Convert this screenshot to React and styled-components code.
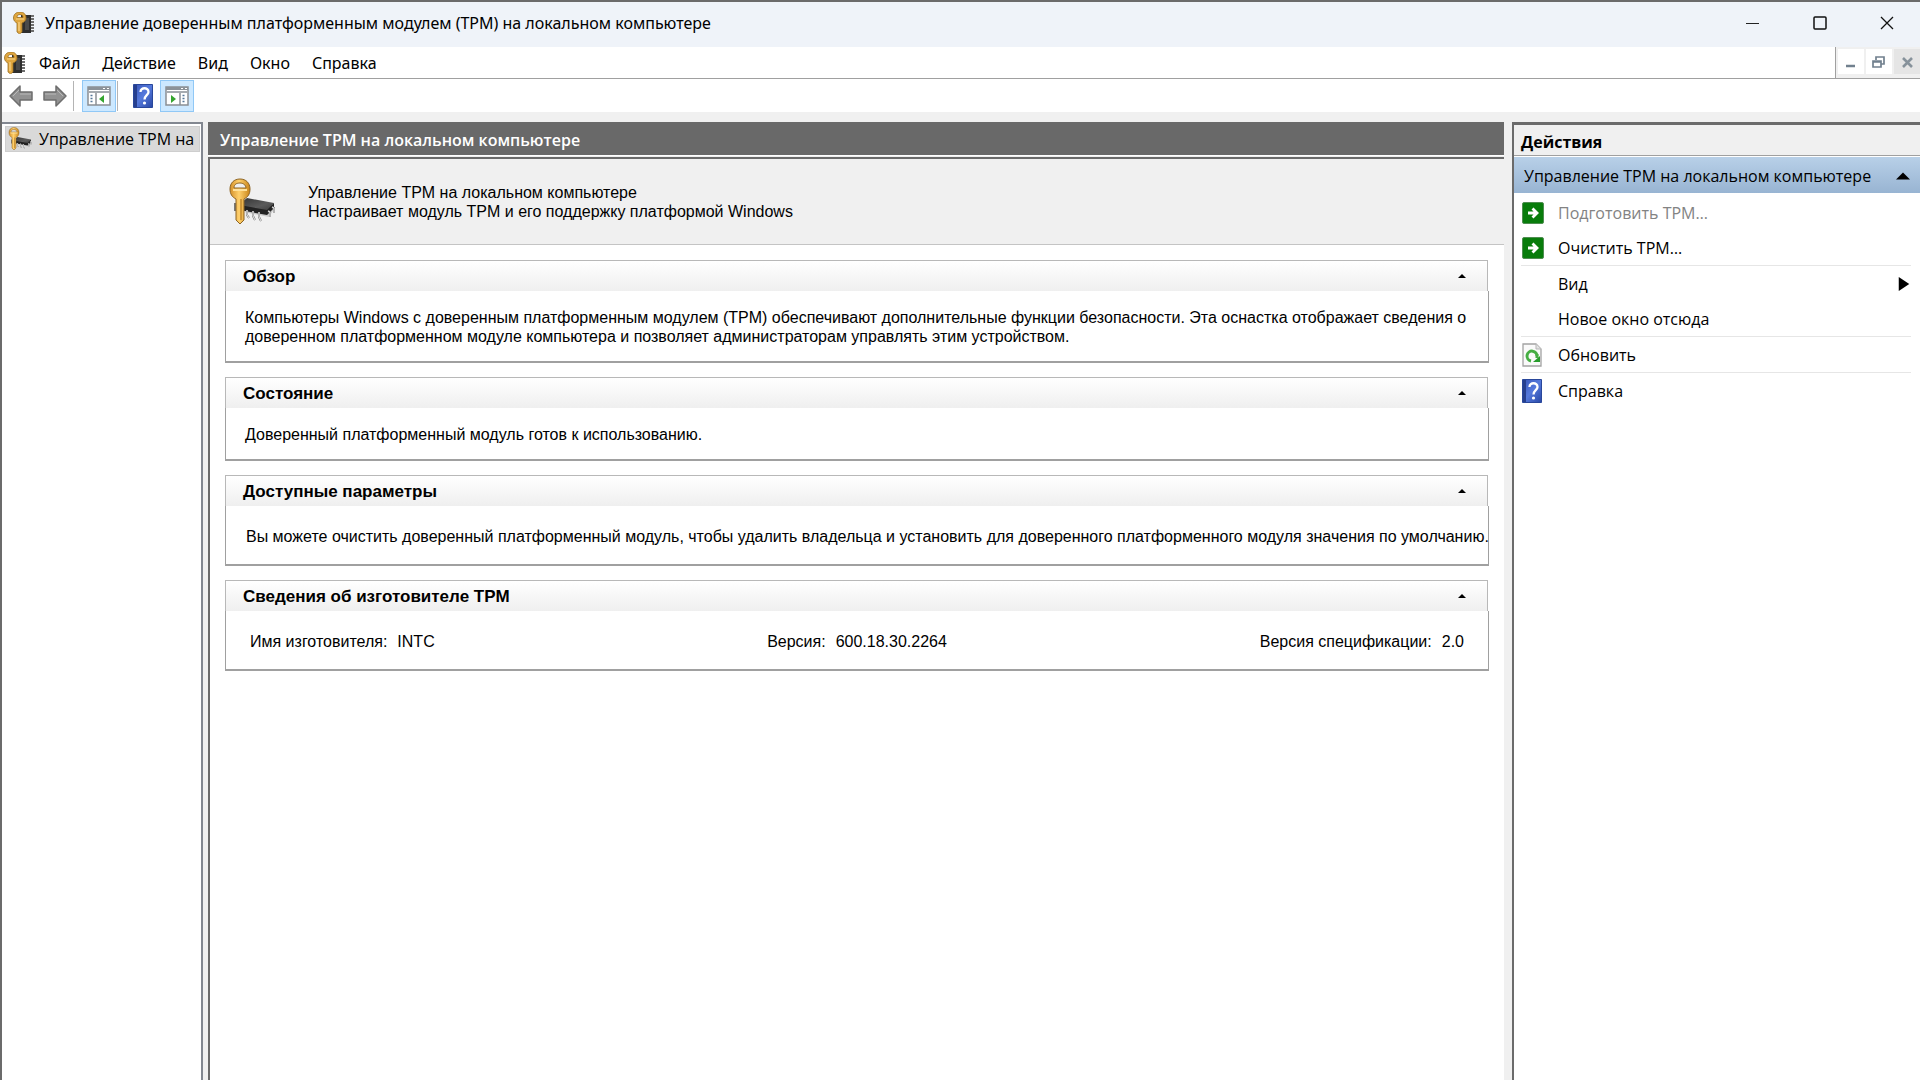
import React, { useState } from "react";
import styled, { createGlobalStyle } from "styled-components";

const colors = {
  frame: "#6b6b6b",
  bar: "#696969",
  face: "#f0f0f0",
  line: "#a0a0a0",
  text: "#000000",
  disabled: "#838383",
};

const uiFont = '"Open Sans", "Noto Sans", sans-serif';
const captionFont = '"Noto Sans", "Open Sans", sans-serif';
const formFont = '"Liberation Sans", Arial, sans-serif';

const menuItems = ["Файл", "Действие", "Вид", "Окно", "Справка"];

const KeyIcon = ({ size = 22 }) => (
  <svg width={size} height={size} viewBox="0 0 22 22" aria-hidden="true">
    <path d="M8 3h10v18H8z" fill="#2e2e2e" />
    <path d="M12 6h4v12h-4z" fill="#4a4a4a" />
    <path d="M19.500 3v18" stroke="#6f6f6f" strokeWidth="3" strokeDasharray="2 1" />
    <path
      fillRule="evenodd"
      d="M7 0C3 0 .500 2.500 .500 6c0 2.500 1.500 4 3.500 5v9l2.500 2L9 20v-9c2.500-1 4-2.500 4-5 0-3.500-2-6-6-6zM4 5.500C4 3.500 5 2.500 7 2.500s3 1 3 3z"
      fill="#e0a63e"
      stroke="#9a6f22"
      strokeWidth=".8"
    />
    <path d="M3 7h8M6 10v9" stroke="#f8d58c" strokeWidth="1.200" />
  </svg>
);

const ChipKeyIcon = ({ size = 48 }) => (
  <svg width={size} height={size} viewBox="0 0 48 48" aria-hidden="true">
    <defs>
      <linearGradient id="chipTop" x1="0" y1="0" x2="1" y2="1">
        <stop offset="0" stopColor="#303030" />
        <stop offset=".6" stopColor="#5b5b5b" />
        <stop offset="1" stopColor="#383838" />
      </linearGradient>
      <linearGradient id="keyGold" x1="0" y1="0" x2="1" y2="0">
        <stop offset="0" stopColor="#d4902a" />
        <stop offset=".45" stopColor="#ffd06c" />
        <stop offset="1" stopColor="#c98418" />
      </linearGradient>
    </defs>
    <path d="M16 34l25 5 5-8-4-4z" fill="#c9c9c9" />
    <path d="M19 20l27 5-7 9-31-5z" fill="url(#chipTop)" />
    <path d="M6 26l33 6 7-7v5l-7 7L6 31z" fill="#222" />
    <path
      d="M19 32v5l2 3M25 33v5l2 4M31 34v5l2 4M40 33l2 1v5M44 29l2 1v5M7 25v8"
      fill="none"
      stroke="#777"
      strokeWidth="2"
    />
    <path
      d="M19 32v5l2 3M25 33v5l2 4M31 34v5l2 4M40 33l2 1v5M44 29l2 1v5"
      fill="none"
      stroke="#eee"
      strokeWidth="1"
    />
    <path
      fillRule="evenodd"
      d="M12 1C6 1 2 5 2 11c0 5 2 8 6 10v21l4 4 4-4V21c4-2 6-5 6-10C22 5 18 1 12 1zM6 10c0-4 3-5 6-5s6 2 6 5z"
      fill="url(#keyGold)"
      stroke="#8d6424"
      strokeWidth="1"
    />
    <path d="M5 12h14" stroke="#ffe19a" strokeWidth="2" />
    <path d="M13 21v21" stroke="#a76c17" strokeWidth="1" />
  </svg>
);

const ArrowIcon = ({ back }) => (
  <svg width="26" height="24" viewBox="0 0 26 24" aria-hidden="true">
    <path
      d={back ? "M2 12L12 2v6h12v8H12v6z" : "M24 12L14 2v6H2v8h12v6z"}
      fill="#929292"
      stroke="#6e6e6e"
      strokeWidth="1.500"
      strokeLinejoin="round"
    />
    <path d={back ? "M5 12l6-6M12 10h11" : "M21 12l-6-6M3 10h11"} stroke="#b9b9b9" strokeWidth="1" />
  </svg>
);

const PaneIcon = ({ right }) => (
  <svg width="24" height="20" viewBox="0 0 24 20" aria-hidden="true">
    <path d="M1 1h22v18H1z" fill="#fff" stroke="#8b8f94" strokeWidth="1.500" />
    <path d="M1 1h22v3H1z" fill="#8b9299" />
    <path d="M16 2.500h2M20 2.500h2" stroke="#fff" />
    <path d="M2 6h20" stroke="#a6abb0" strokeWidth="2" />
    <path d={right ? "M15 7v12" : "M9 7v12"} stroke="#8b8f94" strokeWidth="1.500" />
    <path
      d={right ? "M17.500 9.500h3M17.500 12.500h3M17.500 15.500h3" : "M3.500 9.500h3M3.500 12.500h3M3.500 15.500h3"}
      stroke="#56789a"
      strokeWidth="1.500"
      strokeDasharray="2 1"
    />
    <path d={right ? "M6 9v8l5-4z" : "M17 9v8l-5-4z"} fill="#35a52f" />
  </svg>
);

const HelpIcon = () => (
  <svg width="20" height="24" viewBox="0 0 20 24" aria-hidden="true">
    <defs>
      <linearGradient id="book" x1="0" y1="0" x2="1" y2="1">
        <stop offset="0" stopColor="#3856b8" />
        <stop offset=".5" stopColor="#5579dc" />
        <stop offset="1" stopColor="#2847a4" />
      </linearGradient>
    </defs>
    <path d="M.500 .500h19v23H.500z" fill="url(#book)" stroke="#29479b" />
    <path d="M1 1h3v22H1z" fill="#263f8e" />
    <path d="M7.500 8c0-5 8-5 8 0 0 3-4 3.500-4 7.500" fill="none" stroke="#fff" strokeWidth="2.300" />
    <circle cx="11.500" cy="19" r="1.600" fill="#fff" />
  </svg>
);

const GoIcon = () => (
  <svg width="22" height="22" viewBox="0 0 22 22" aria-hidden="true">
    <rect x=".500" y=".500" width="21" height="21" rx="1.500" fill="#087c0b" stroke="#4f8e51" />
    <path d="M6 11h9M10.500 6.500L15 11l-4.500 4.500" fill="none" stroke="#fff" strokeWidth="2.800" />
  </svg>
);

const RefreshIcon = () => (
  <svg width="20" height="24" viewBox="0 0 20 24" aria-hidden="true">
    <path d="M1 1h13l5 5v17H1z" fill="#fafafa" stroke="#a2a2a2" strokeWidth="1.300" />
    <path d="M14 1v5h5" fill="#e4e4e4" stroke="#b5b5b5" />
    <path d="M9 18A5 5 0 1 1 15 13.500" fill="none" stroke="#46ae43" strokeWidth="3" />
    <path d="M11 13h7v6h-7z" fill="#fafafa" />
    <path d="M15 11v4" stroke="#46ae43" strokeWidth="3" />
    <path d="M18 13v6h-7z" fill="#279c2b" />
  </svg>
);

const Triangle = ({ size = 8, right }) => (
  <svg width={size} height={size} viewBox="0 0 8 8" aria-hidden="true">
    <path d={right ? "M1 0l6 4-6 4z" : "M0 6l4-4 4 4z"} fill="#000" />
  </svg>
);

const Section = ({ title, padding, children }) => {
  const [open, setOpen] = useState(true);

  return (
    <Group>
      <GroupHead aria-expanded={open} onClick={() => setOpen(!open)}>
        {title}
        <Triangle />
      </GroupHead>
      {open && <GroupBody $padding={padding}>{children}</GroupBody>}
    </Group>
  );
};

const App = () => {
  const [tree, setTree] = useState(true);
  const [actions, setActions] = useState(true);

  return (
    <>
      <GlobalStyle />
      <Window>
        <TitleBar>
          <KeyIcon />
          <Title>Управление доверенным платформенным модулем (TPM) на локальном компьютере</Title>
          <WindowButton aria-label="Свернуть">
            <svg width="14" height="14"><path d="M0 7.500h13" stroke="#222" /></svg>
          </WindowButton>
          <WindowButton aria-label="Развернуть">
            <svg width="14" height="14"><rect x="1" y="1" width="12" height="12" rx="1" fill="none" stroke="#111" strokeWidth="1.500" /></svg>
          </WindowButton>
          <WindowButton aria-label="Закрыть">
            <svg width="14" height="14"><path d="M1 1l12 12M13 1L1 13" stroke="#111" strokeWidth="1.300" /></svg>
          </WindowButton>
        </TitleBar>

        <MenuRow>
          <MenuBar>
            <KeyIcon />
            {menuItems.map((item) => (
              <MenuButton key={item}>{item}</MenuButton>
            ))}
          </MenuBar>
          <ChildControls>
            <ChildButton aria-label="Свернуть окно">
              <svg width="14" height="14"><path d="M2 11h9" stroke="#71808e" strokeWidth="2.500" /></svg>
            </ChildButton>
            <ChildButton aria-label="Восстановить окно">
              <svg width="14" height="14">
                <path d="M4 5V2h8v7h-3M4 2h8" fill="none" stroke="#71808e" strokeWidth="1.700" />
                <path d="M1 6h8v6H1zM1 7h8" fill="none" stroke="#71808e" strokeWidth="1.700" />
              </svg>
            </ChildButton>
            <ChildButton $shaded aria-label="Закрыть окно">
              <svg width="14" height="14"><path d="M3 3l9 9M12 3l-9 9" stroke="#87929b" strokeWidth="2.600" /></svg>
            </ChildButton>
          </ChildControls>
        </MenuRow>

        <Toolbar>
          <ToolButton aria-label="Назад"><ArrowIcon back /></ToolButton>
          <ToolButton aria-label="Вперёд"><ArrowIcon /></ToolButton>
          <Separator />
          <ToolButton $active aria-label="Дерево консоли" onClick={() => setTree(!tree)}><PaneIcon /></ToolButton>
          <Separator />
          <ToolButton aria-label="Справка"><HelpIcon /></ToolButton>
          <ToolButton $active aria-label="Панель действий" onClick={() => setActions(!actions)}><PaneIcon right /></ToolButton>
        </Toolbar>

        <Panes>
          {tree && (
            <TreePane>
              <TreeItem>
                <ChipKeyIcon size={24} />
                Управление TPM на
              </TreeItem>
            </TreePane>
          )}

          <Main>
            <MainTitle>Управление TPM на локальном компьютере</MainTitle>
            <MainBody>
              <Banner>
                <ChipKeyIcon />
                <p>
                  Управление TPM на локальном компьютере
                  <br />
                  Настраивает модуль TPM и его поддержку платформой Windows
                </p>
              </Banner>
              <Groups>
                <Section title="Обзор" padding="17px 19px 15px">
                  Компьютеры Windows с доверенным платформенным модулем (TPM) обеспечивают дополнительные функции
                  безопасности. Эта оснастка отображает сведения о доверенном платформенном модуле компьютера и
                  позволяет администраторам управлять этим устройством.
                </Section>
                <Section title="Состояние" padding="17px 19px 15px">
                  Доверенный платформенный модуль готов к использованию.
                </Section>
                <Section title="Доступные параметры" padding="21px 0 18px 20px">
                  <Line>
                    Вы можете очистить доверенный платформенный модуль, чтобы удалить владельца и установить для
                    доверенного платформенного модуля значения по умолчанию.
                  </Line>
                </Section>
                <Section title="Сведения об изготовителе TPM" padding="21px 24px 18px">
                  <Details>
                    <Detail><dt>Имя изготовителя:</dt><dd>INTC</dd></Detail>
                    <Detail><dt>Версия:</dt><dd>600.18.30.2264</dd></Detail>
                    <Detail><dt>Версия спецификации:</dt><dd>2.0</dd></Detail>
                  </Details>
                </Section>
              </Groups>
            </MainBody>
          </Main>

          {actions && (
            <ActionPane>
              <ActionTitle>Действия</ActionTitle>
              <ActionHead>
                Управление TPM на локальном компьютере
                <Triangle size={14} />
              </ActionHead>
              <ActionList>
                <ActionGroup>
                  <Action disabled><GoIcon /><span>Подготовить TPM…</span></Action>
                  <Action><GoIcon /><span>Очистить TPM…</span></Action>
                </ActionGroup>
                <ActionGroup>
                  <Action><i /><span>Вид</span><Triangle size={14} right /></Action>
                  <Action><i /><span>Новое окно отсюда</span></Action>
                </ActionGroup>
                <ActionGroup>
                  <Action><RefreshIcon /><span>Обновить</span></Action>
                </ActionGroup>
                <ActionGroup>
                  <Action><HelpIcon /><span>Справка</span></Action>
                </ActionGroup>
              </ActionList>
            </ActionPane>
          )}
        </Panes>
      </Window>
    </>
  );
};

const GlobalStyle = createGlobalStyle`
  * {
    box-sizing: border-box;
  }

  body, h1, h2, p, dl, dd {
    margin: 0;
  }

  button {
    padding: 0;
    border: 0;
    background: none;
    color: inherit;
    font: inherit;
    text-align: left;
  }

  svg {
    flex: none;
  }
`;

const Window = styled.div`
  display: flex;
  flex-direction: column;
  min-height: 100vh;
  border-top: 2px solid ${colors.frame};
  border-left: 2px solid ${colors.frame};
  background: ${colors.face};
  color: ${colors.text};
  font: 16px/24px ${uiFont};
`;

const TitleBar = styled.header`
  display: flex;
  align-items: center;
  height: 45px;
  padding: 0 0 3px 11px;
  background: #eff3f9;
`;

const Title = styled.h1`
  flex: 1;
  margin-left: 10px;
  font: 400 16px/24px ${captionFont};
`;

const WindowButton = styled.button`
  display: grid;
  place-items: center;
  width: 67px;
  height: 42px;
`;

const MenuRow = styled.div`
  display: flex;
  height: 32px;
  background: #fff;
  border-bottom: 1px solid ${colors.line};
`;

const MenuBar = styled.nav`
  display: flex;
  flex: 1;
  align-items: center;
  padding-left: 2px;
  border-right: 1px solid ${colors.line};
  font-family: ${captionFont};
`;

const MenuButton = styled.button`
  padding: 0 11px;

  svg + & {
    margin-left: 2px;
  }
`;

const ChildControls = styled.div`
  display: flex;
  gap: 2px;
  padding: 2px 0 4px 2px;
  background: ${colors.face};
`;

const ChildButton = styled.button`
  display: grid;
  place-items: center;
  width: 26px;
  background: ${({ $shaded }) => ($shaded ? "#e5e5e5" : "#fff")};
`;

const Toolbar = styled.div`
  display: flex;
  align-items: flex-end;
  height: 33px;
  padding-left: 2px;
  background: #fff;
`;

const ToolButton = styled.button`
  display: grid;
  place-items: center;
  width: 34px;
  height: 32px;
  border: 1px solid ${({ $active }) => ($active ? "#90c8f6" : "transparent")};
  background: ${({ $active }) => ($active ? "#cce8ff" : "none")};
`;

const Separator = styled.span`
  width: 1px;
  height: 30px;
  margin: 0 8px 1px 1px;
  background: #b4b4b4;
`;

const Panes = styled.div`
  display: flex;
  flex: 1;
  padding-top: 10px;
`;

const TreePane = styled.aside`
  width: 201px;
  margin-right: 5px;
  padding: 2px 1px 0 3px;
  border: solid #828790;
  border-width: 2px 2px 0 0;
  background: #fff;
`;

const TreeItem = styled.button`
  display: flex;
  align-items: center;
  gap: 7px;
  width: 100%;
  height: 26px;
  padding-left: 2px;
  border: 1px solid #cecece;
  background: #d9d9d9;
  white-space: nowrap;
  overflow: hidden;
`;

const Main = styled.main`
  display: flex;
  flex: 1;
  flex-direction: column;
  min-width: 0;
`;

const MainTitle = styled.h2`
  height: 34px;
  padding: 5px 12px;
  border-bottom: 1px solid #fff;
  background: ${colors.bar};
  color: #fff;
  font-size: 16px;
  font-weight: 600;
  line-height: 27px;
`;

const MainBody = styled.div`
  flex: 1;
  margin-top: 1px;
  border: solid ${colors.frame};
  border-width: 2px 0 0 2px;
  background: #fff;
`;

const Banner = styled.div`
  display: flex;
  align-items: center;
  gap: 32px;
  height: 86px;
  padding: 1px 0 0 18px;
  border-bottom: 1px solid #c4c4c4;
  background: ${colors.face};
  font: 16px/19px ${formFont};
`;

const Groups = styled.div`
  display: grid;
  gap: 14px;
  padding: 15px;
  font: 16px/19px ${formFont};
`;

const Group = styled.section`
  min-width: 0;
`;

const GroupHead = styled.button`
  display: flex;
  align-items: center;
  justify-content: space-between;
  width: calc(100% - 1px);
  height: 31px;
  padding: 0 21px 0 17px;
  border: 1px solid #b8b8b8;
  border-bottom: 0;
  background: linear-gradient(#fff, #efefef);
  font-size: 17px;
  font-weight: 700;
`;

const GroupBody = styled.div`
  padding: ${({ $padding }) => $padding};
  border: solid ${colors.line};
  border-width: 0 1px 2px;
`;

const Line = styled.p`
  white-space: nowrap;
`;

const Details = styled.dl`
  display: grid;
  grid-template-columns: 1fr auto 1fr;
`;

const Detail = styled.div`
  display: flex;
  gap: 10px;

  &:last-child {
    justify-content: flex-end;
  }
`;

const ActionPane = styled.aside`
  width: 408px;
  margin-left: 8px;
  border: solid ${colors.frame};
  border-width: 3px 0 0 2px;
  background: #fff;
`;

const ActionTitle = styled.h2`
  height: 31px;
  padding: 5px 7px;
  border-bottom: 1px solid ${colors.line};
  background: ${colors.face};
  font-size: 16px;
  line-height: 24px;
`;

const ActionHead = styled.button`
  display: flex;
  align-items: center;
  justify-content: space-between;
  width: 100%;
  height: 36px;
  margin-top: 1px;
  padding: 2px 10px 0;
  background: linear-gradient(#b8d0e8, #98b4d2);
`;

const ActionList = styled.div`
  padding: 2px 9px 0 7px;
`;

const ActionGroup = styled.div`
  & + & {
    border-top: 1px solid #e6e6e6;
  }
`;

const Action = styled.button`
  display: grid;
  grid-template-columns: 24px 1fr 14px;
  align-items: center;
  gap: 12px;
  width: 100%;
  height: 35px;
  padding-left: 1px;

  &:disabled span {
    color: ${colors.disabled};
  }
`;

export default App;
